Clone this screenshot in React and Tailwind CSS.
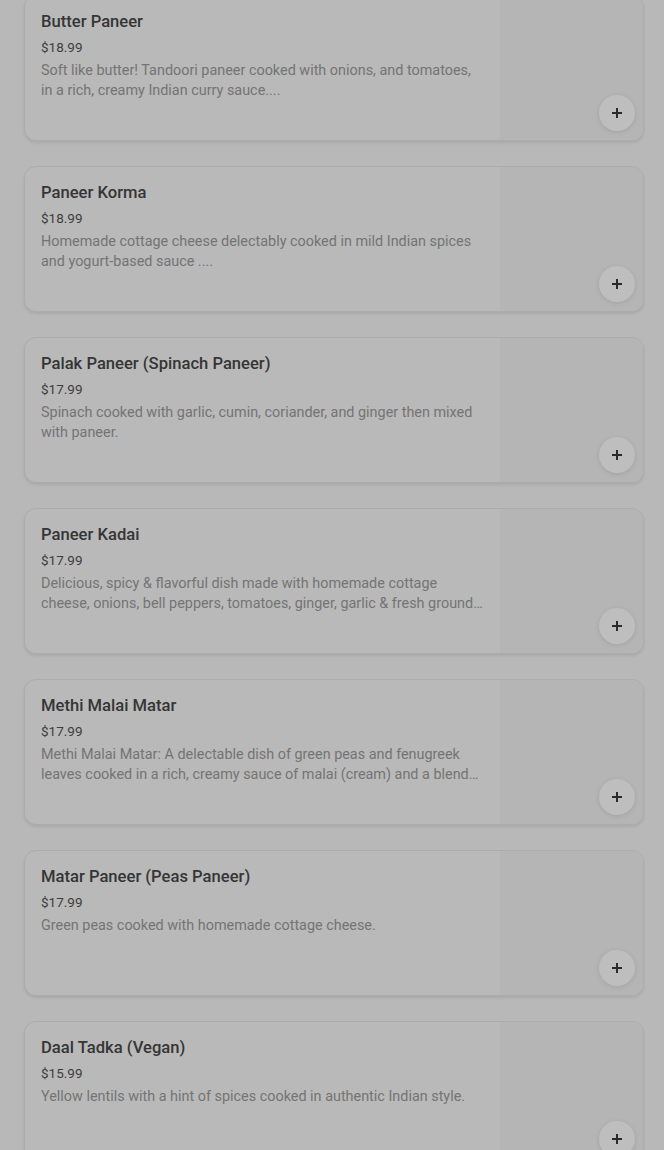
import React from "react";

const items = [
  {
    name: "Butter Paneer",
    price: "$18.99",
    desc: "Soft like butter! Tandoori paneer cooked with onions, and tomatoes, in a rich, creamy Indian curry sauce....",
  },
  {
    name: "Paneer Korma",
    price: "$18.99",
    desc: "Homemade cottage cheese delectably cooked in mild Indian spices and yogurt-based sauce ....",
  },
  {
    name: "Palak Paneer (Spinach Paneer)",
    price: "$17.99",
    desc: "Spinach cooked with garlic, cumin, coriander, and ginger then mixed with paneer.",
  },
  {
    name: "Paneer Kadai",
    price: "$17.99",
    desc: "Delicious, spicy & flavorful dish made with homemade cottage cheese, onions, bell peppers, tomatoes, ginger, garlic & fresh ground spices.",
  },
  {
    name: "Methi Malai Matar",
    price: "$17.99",
    desc: "Methi Malai Matar: A delectable dish of green peas and fenugreek leaves cooked in a rich, creamy sauce of malai (cream) and a blend of spices.",
  },
  {
    name: "Matar Paneer (Peas Paneer)",
    price: "$17.99",
    desc: "Green peas cooked with homemade cottage cheese.",
  },
  {
    name: "Daal Tadka (Vegan)",
    price: "$15.99",
    desc: "Yellow lentils with a hint of spices cooked in authentic Indian style.",
  },
];

const MenuCard = ({ item }) => {
  return (
    <div className="flex h-[146px] rounded-xl border border-[#acacac] bg-[#b9b9b9] shadow-[0_2px_3px_rgba(0,0,0,0.08)] overflow-hidden">
      <div className="flex-1 min-w-0 p-4">
        <h3 className="text-[16.6px] leading-5 font-medium text-[#353535]">{item.name}</h3>
        <p className="mt-[5px] text-[13.5px] leading-5 text-[#3d3d3d]">{item.price}</p>
        <p className="mt-1 text-[14.4px] leading-5 text-[#747474] line-clamp-2">{item.desc}</p>
      </div>
      <div className="relative w-[143px] shrink-0 bg-[#b5b5b5]">
        <button className="absolute right-[8px] bottom-[9px] flex h-9 w-9 items-center justify-center rounded-full bg-[#bebebe] shadow-[0_1px_5px_rgba(0,0,0,0.1)]">
          <svg width="12" height="12" viewBox="0 0 12 12">
            <path d="M6 1v10M1 6h10" stroke="#2a2a2a" strokeWidth="2" />
          </svg>
        </button>
      </div>
    </div>
  );
};

const App = () => {
  return (
    <div
      className="min-h-screen h-[1150px] overflow-hidden bg-[#b8b8b8]"
      style={{ fontFamily: "Roboto, 'Liberation Sans', sans-serif" }}
    >
      <div className="ml-6 mt-[-5px] flex w-[620px] flex-col gap-[25px]">
        {items.map((item) => (
          <MenuCard key={item.name} item={item} />
        ))}
      </div>
    </div>
  );
};

export default App;
